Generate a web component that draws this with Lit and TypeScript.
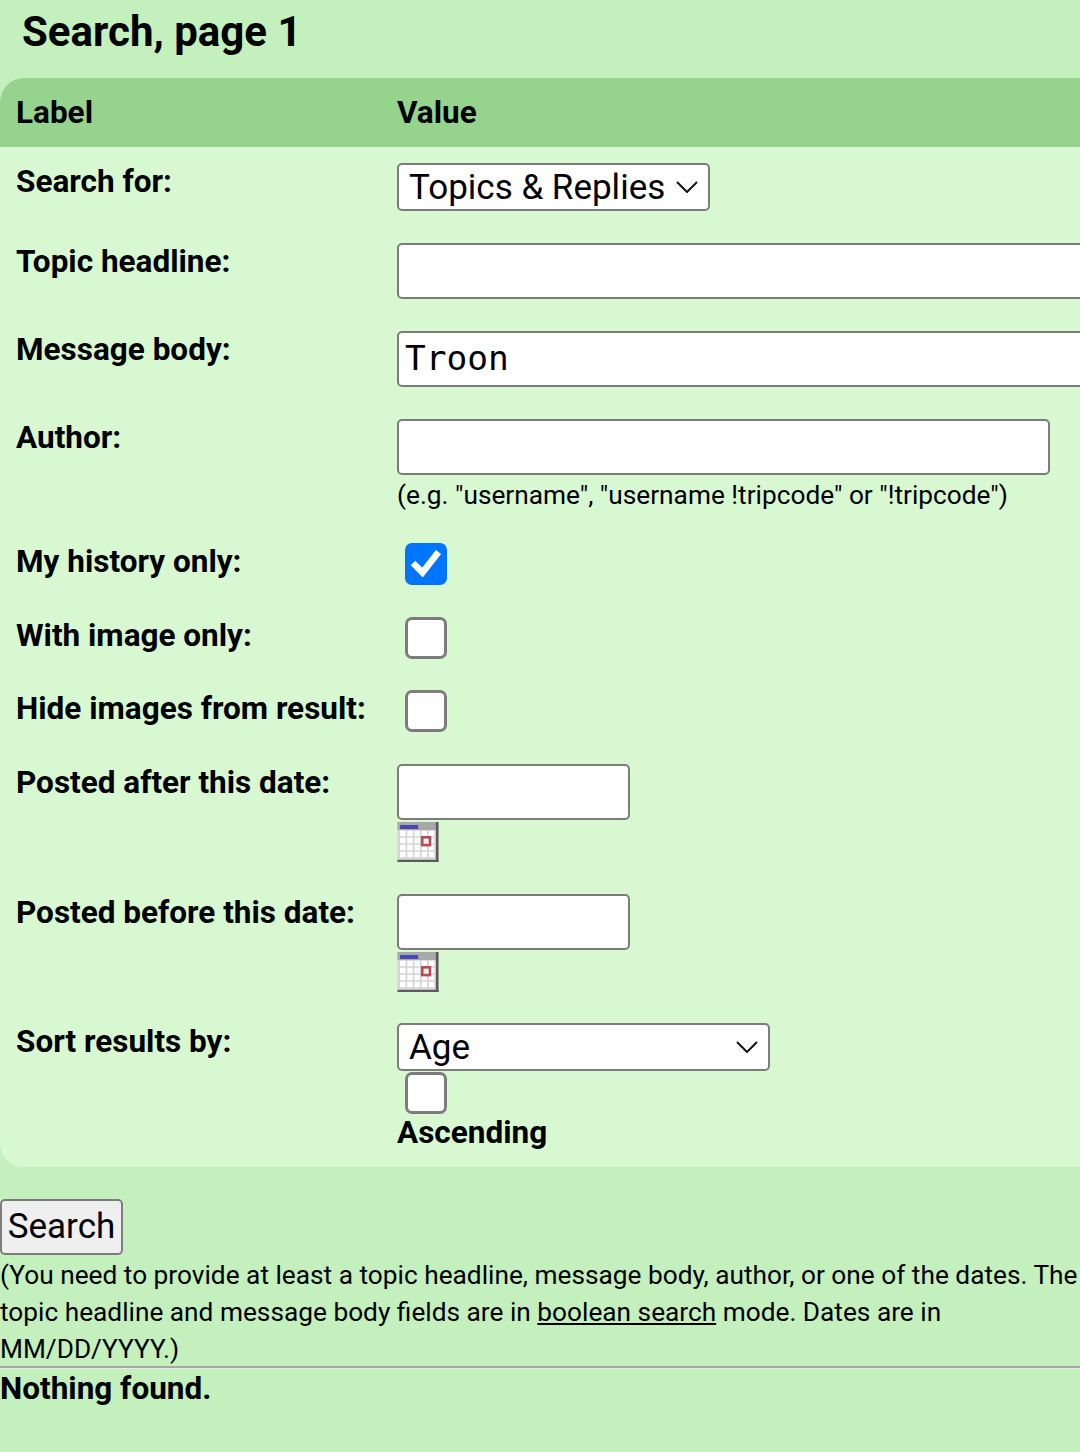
import { LitElement, css, html, svg } from "lit";
import { customElement } from "lit/decorators.js";

const chevron = html`<svg class="chev" width="22" height="12" viewBox="0 0 22 12">
  <path d="M1 1l10 10L21 1" fill="none" stroke="#111" stroke-width="2" />
</svg>`;

// small raster-looking calendar, drawn on a 20 unit grid
const calCells = [4.4, 7.9, 11.4, 14.9].flatMap((y) =>
  [1.3, 4.9, 8.5, 12.1, 15.7].map(
    (x) => svg`<rect x=${x} y=${y} width="2.7" height="2.7" fill="#fff" />`
  )
);
const calendar = html`<svg class="cal" width="42" height="40" viewBox="0 0 20.5 20">
  <rect width="20.5" height="20" fill="#d6d6d6" />
  <rect x="0" y="0" width="19.5" height="4" fill="#a8a8a8" />
  <rect x="1.3" y="1.5" width="9" height="2" fill="#4646b4" />
  ${calCells}
  <rect x="11.7" y="7" width="5.2" height="5.2" fill="#b84a55" />
  <rect x="13" y="8.3" width="2.6" height="2.6" fill="#eee" />
  <rect x="19.2" y="0" width="1.3" height="20" fill="#5a5a5a" />
  <rect x="0" y="18.9" width="20.5" height="1.1" fill="#5a5a5a" />
</svg>`;

@customElement("app-root")
export class AppRoot extends LitElement {
  static styles = css`
    :host {
      display: block;
      width: 1080px;
      height: 1452px;
      overflow: hidden;
      background: #c3f0bd;
      color: #000;
      font-family: Roboto, "Liberation Sans", sans-serif;
      font-size: 26.25px;
      line-height: 37px;
    }
    h1 {
      margin: 0;
      padding: 7px 0 0 22px;
      height: 78px;
      box-sizing: border-box;
      font-size: 42px;
      line-height: 49px;
      font-weight: 700;
    }
    .table {
      border-radius: 24px 0 0 24px;
      background: #d8f8d2;
      overflow: hidden;
    }
    .head,
    .row {
      display: grid;
      grid-template-columns: 397px 1fr;
    }
    .head {
      height: 69px;
      background: #96d48e;
      font-weight: 700;
      font-size: 31.5px;
      line-height: 69px;
    }
    .head div:first-child,
    .row > label {
      padding-left: 16px;
    }
    .row {
      padding: 16px 0;
    }
    .row.tight {
      padding-bottom: 15px;
    }
    .row.hinted {
      padding-bottom: 14px;
    }
    .row.last {
      padding-bottom: 15px;
    }
    .row > label {
      font-weight: 700;
      font-size: 31.5px;
      line-height: 38px;
    }
    .value {
      min-width: 0;
    }
    .select {
      box-sizing: border-box;
      height: 48px;
      display: flex;
      align-items: center;
      justify-content: space-between;
      padding: 0 10px;
      background: #fff;
      border: 2px solid #7c7c7c;
      border-radius: 5px;
      font-size: 35px;
    }
    .select.topics {
      width: 313px;
    }
    .select.sort {
      width: 373px;
    }
    .field {
      display: block;
      box-sizing: border-box;
      height: 56px;
      padding: 0 6px 2px;
      background: #fff;
      border: 2px solid #7c7c7c;
      border-radius: 5px;
      font-family: "DejaVu Sans Mono", monospace;
      font-size: 34.5px;
      color: #000;
      outline: none;
    }
    .full {
      width: 720px;
    }
    .author {
      width: 653px;
    }
    .date {
      width: 233px;
    }
    .hint {
      margin-top: 2px;
      height: 36px;
      line-height: 36px;
    }
    .check {
      box-sizing: border-box;
      display: block;
      width: 42px;
      height: 42px;
      margin-left: 8px;
      background: #fff;
      border: 3px solid #7c7c7c;
      border-radius: 7px;
    }
    .check.on {
      background: #0075ff;
      border: none;
    }
    .check.on svg {
      display: block;
    }
    .cal {
      display: block;
      margin-top: 2px;
      filter: blur(0.5px);
    }
    .asc {
      margin-top: 1px;
      font-weight: 700;
      font-size: 31.5px;
      line-height: 36px;
    }
    .check.under {
      margin-top: 1px;
    }
    button {
      display: block;
      box-sizing: border-box;
      margin: 32px 0 0;
      width: 123px;
      height: 56px;
      padding: 0 0 2px;
      background: #efefef;
      border: 2px solid #7c7c7c;
      border-radius: 5px;
      font-family: inherit;
      font-size: 35px;
      color: #000;
    }
    .note {
      margin: 0;
      padding-top: 2px;
      height: 111px;
      box-sizing: border-box;
    }
    .note a {
      color: inherit;
    }
    hr {
      margin: 0;
      height: 2px;
      border: none;
      background: #a8a8a8;
      box-shadow: 0 1px 0 #e4f0e2;
    }
    .none {
      font-weight: 700;
      font-size: 31.5px;
      line-height: 42px;
    }
  `;

  row(label: string, value: unknown, variant = "") {
    return html`<div class="row ${variant}">
      <label>${label}</label>
      <div class="value">${value}</div>
    </div>`;
  }

  render() {
    return html`
      <h1>Search, page 1</h1>
      <div class="table">
        <div class="head"><div>Label</div><div>Value</div></div>
        ${this.row(
          "Search for:",
          html`<div class="select topics"><span>Topics &amp; Replies</span>${chevron}</div>`
        )}
        ${this.row("Topic headline:", html`<input class="field full" />`)}
        ${this.row("Message body:", html`<input class="field full" value="Troon" />`)}
        ${this.row(
          "Author:",
          html`<input class="field author" />
            <div class="hint">(e.g. "username", "username !tripcode" or "!tripcode")</div>`,
          "hinted"
        )}
        ${this.row(
          "My history only:",
          html`<div class="check on">
            <svg width="42" height="42" viewBox="0 0 42 42">
              <path d="M8 20l9.5 9.5L33.5 9" fill="none" stroke="#fff" stroke-width="6.5" />
            </svg>
          </div>`
        )}
        ${this.row("With image only:", html`<div class="check"></div>`, "tight")}
        ${this.row("Hide images from result:", html`<div class="check"></div>`)}
        ${this.row(
          "Posted after this date:",
          html`<input class="field date" />${calendar}`
        )}
        ${this.row(
          "Posted before this date:",
          html`<input class="field date" />${calendar}`,
          "last"
        )}
        ${this.row(
          "Sort results by:",
          html`<div class="select sort"><span>Age</span>${chevron}</div>
            <div class="check under"></div>
            <div class="asc">Ascending</div>`
        )}
      </div>
      <button>Search</button>
      <p class="note">
        (You need to provide at least a topic headline, message body, author, or one of the
        dates. The topic headline and message body fields are in
        <a href="#">boolean search</a> mode. Dates are in MM/DD/YYYY.)
      </p>
      <hr />
      <div class="none">Nothing found.</div>
    `;
  }
}
